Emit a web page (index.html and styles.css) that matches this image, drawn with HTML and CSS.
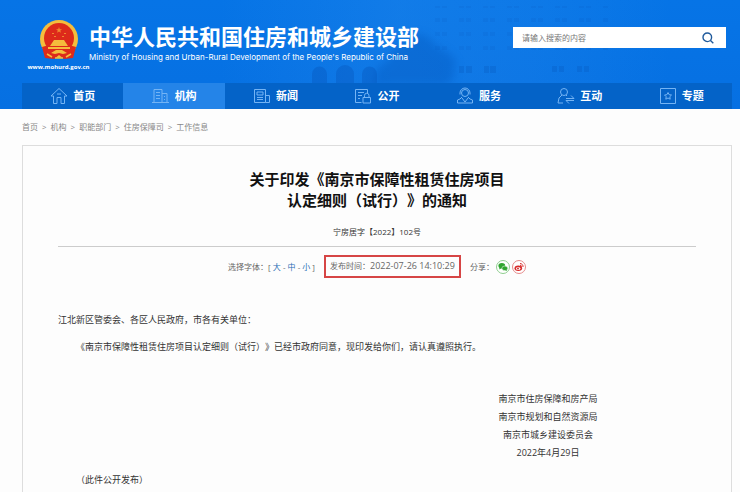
FILE: index.html
```html
<!DOCTYPE html>
<html lang="zh-CN">
<head>
    <meta charset="utf-8">
    <meta name="viewport" content="width=device-width, initial-scale=1">
    <title>中华人民共和国住房和城乡建设部</title>
    <link rel="stylesheet" href="styles.css">
</head>
<body>

<header class="header">
    <svg class="skyline" viewBox="0 0 740 109" preserveAspectRatio="xMidYMax slice" aria-hidden="true">
        <defs>
            <pattern id="windows" width="24" height="14" patternUnits="userSpaceOnUse">
                <path d="M3 4h5v4H3zM10 4h5v4h-5z" fill="#0552b8"/>
            </pattern>
            <linearGradient id="haze">
                <stop offset="0" stop-color="#3a97f0" stop-opacity="0"/>
                <stop offset=".4" stop-color="#3a97f0" stop-opacity=".22"/>
                <stop offset=".7" stop-color="#3a97f0" stop-opacity=".15"/>
                <stop offset="1" stop-color="#3a97f0" stop-opacity="0"/>
            </linearGradient>
            <filter id="soft" x="-20%" y="-20%" width="140%" height="140%">
                <feGaussianBlur stdDeviation="4"/>
            </filter>
        </defs>
        <path d="M220 0h450v83H220z" fill="url(#haze)"/>
        <path d="M432 6h178v54H432z" fill="url(#windows)" opacity=".13"/>
        <path d="M312 83V74a7 7 0 0 1 15 0v9zM336 83V74a9 9 0 0 1 18 0v9zM362 83V74a7 7 0 0 1 15 0v9z" fill="#0552b8" opacity=".35"/>
        <path d="M372 86l6-19 10-6 6-12 10-6 12-10 12 4 10 10 11 6 8 10-4 6 2 8-10 9z" fill="#0552b8" opacity=".35" filter="url(#soft)"/>
        <path d="M459 66h5v7h-5zM466 66h6v7h-6zM484 66h5v7h-5zM490 66h6v7h-6zM552 66h5v6h-5zM559 66h5v6h-5zM577 66h5v6h-5zM584 66h5v6h-5z" fill="#0552b8" opacity=".25"/>
    </svg>

    <div class="wrap masthead">
        <div class="emblem">
            <svg width="40" height="42" viewBox="0 0 40 42" aria-hidden="true">
                <circle cx="20" cy="20" r="19" fill="#f5bd3c"/>
                <circle cx="20" cy="19" r="15" fill="#dd2a1b"/>
                <path d="M3 28l7-2 3 5h14l3-5 7 2-3 11-9 1-5-4-5 4-9-1z" fill="#dd2a1b"/>
                <path d="M20 8l.8 2.200H23l-1.700 1.400.6 2.200L20 12.500l-1.900 1.300.6-2.200L17 10.200h2.200z" fill="#f08a30"/>
                <path d="M13 14h2v1h-2zM25 14h2v1h-2zM15 17h2v1h-2zM23 17h2v1h-2z" fill="#f08a30"/>
                <path d="M13 24l2-3h10l2 3 2 3H11z" fill="#f5bd3c"/>
                <path d="M9 28h22v2H9z" fill="#f5bd3c"/>
                <path d="M12 34l5-3h6l5 3-4 1-4-1-4 1z" fill="#f5bd3c"/>
                <path d="M8 35l5 3M32 35l-5 3M16 39h8" stroke="#f5bd3c" stroke-width="1.5" fill="none"/>
            </svg>
            <span class="domain">www.mohurd.gov.cn</span>
        </div>
        <div class="name">
            <h1>中华人民共和国住房和城乡建设部</h1>
            <p>Ministry of Housing and Urban-Rural Development of the People's Republic of China</p>
        </div>
        <form class="search" onsubmit="return false">
            <input type="text" placeholder="请输入搜索的内容" aria-label="搜索">
            <button type="submit" aria-label="搜索">
                <svg width="12" height="12" viewBox="0 0 12 12" fill="none" stroke="#1f5a9c" stroke-width="1.4">
                    <circle cx="5.3" cy="5.3" r="4.3"/>
                    <path d="M8.5 8.5l2.8 2.8"/>
                </svg>
            </button>
        </form>
    </div>

    <nav class="wrap nav">
        <a href="#">
            <svg viewBox="0 0 18 18"><path d="M1 9l8-7.500 8 7.500h-2.500v7.500h-3.500v-6h-4v6H3.500V9zM7 7h4"/></svg>
            首页
        </a>
        <a href="#" class="active">
            <svg viewBox="0 0 18 18"><path d="M2 15.500V2.500h8v13M10 6.500h5v9M0 15.500h17M4 5.500h4M4 8.500h4M4 11.500h4M12 9.500h1M12 12.500h1"/></svg>
            机构
        </a>
        <a href="#">
            <svg viewBox="0 0 18 18"><path d="M12.500 15.500h-11v-13h11v13h4v-7h-4M4 5h6v3H4zM4 10.500h6M4 12.500h6"/></svg>
            新闻
        </a>
        <a href="#">
            <svg viewBox="0 0 18 18"><path d="M7.500 15.500h-6v-13h12v4M4 5.500h6M4 8.500h4M4 11.500h2M9 10.500h7.500v5.500H9zM10.500 10.500V8.500a2 2 0 0 1 4.500 0v2"/></svg>
            公开
        </a>
        <a href="#">
            <svg viewBox="0 0 18 18"><circle cx="9" cy="6" r="3.500"/><path d="M4 7.500V6a5 5 0 0 1 10 0v1.500M6 10l-2 2-2.500 1v3h15v-3L14 12l-2-2M6 11l3 4 3-4"/></svg>
            服务
        </a>
        <a href="#">
            <svg viewBox="0 0 18 18"><circle cx="7" cy="5" r="3.500"/><path d="M5 8l-3 3-1 5h5M9 8l1 1M9 11.500h8l-3-3M17 13.500H9l3 3"/></svg>
            互动
        </a>
        <a href="#">
            <svg viewBox="0 0 18 18"><path d="M1.500 1.500h15v15h-15zM9 5.500l1.100 2.200 2.400.3-1.700 1.700.4 2.500L9 11l-2.200 1.200.4-2.500L5.500 8l2.400-.3z"/></svg>
            专题
        </a>
    </nav>
</header>

<main class="wrap">
    <div class="crumbs">
        <a href="#">首页</a>
        <span>&gt;</span>
        <a href="#">机构</a>
        <span>&gt;</span>
        <a href="#">职能部门</a>
        <span>&gt;</span>
        <a href="#">住房保障司</a>
        <span>&gt;</span>
        <a href="#">工作信息</a>
    </div>

    <article class="article">
        <h2>关于印发《南京市保障性租赁住房项目<br>认定细则（试行）》的通知</h2>
        <p class="doc-no">宁房居字【2022】102号</p>

        <div class="meta">
            <span class="font-size">选择字体：[ <a href="#">大</a> - <a href="#">中</a> - <a href="#">小</a> ]</span>
            <span class="published">发布时间：<time>2022-07-26 14:10:29</time></span>
            <span class="share">
                分享：
                <a href="#" aria-label="微信">
                    <svg width="14" height="14" viewBox="0 0 14 14">
                        <circle cx="7" cy="7" r="6.500" fill="#fff" stroke="#8fce8f"/>
                        <ellipse cx="5.800" cy="5.800" rx="3.400" ry="2.800" fill="#2fa52f"/>
                        <path d="M3.500 7.500l-.3 2 2-1.300z" fill="#2fa52f"/>
                        <ellipse cx="8.800" cy="8.300" rx="2.900" ry="2.300" fill="#2fa52f" stroke="#fff" stroke-width=".5"/>
                        <path d="M9 10l1.800 1-.3-2z" fill="#2fa52f"/>
                    </svg>
                </a>
                <a href="#" aria-label="微博">
                    <svg width="14" height="14" viewBox="0 0 14 14">
                        <circle cx="7" cy="7" r="6.500" fill="#fff" stroke="#e58a8a"/>
                        <ellipse cx="6.300" cy="8.300" rx="3.800" ry="2.700" fill="#d82c2c"/>
                        <ellipse cx="6.200" cy="8.500" rx="2.200" ry="1.500" fill="#fff"/>
                        <circle cx="6" cy="8.600" r="1" fill="#d82c2c"/>
                        <path d="M8 3.500a3 3 0 0 1 3 3.500M8 5.200a1.400 1.400 0 0 1 1.400 1.600" fill="none" stroke="#d82c2c"/>
                    </svg>
                </a>
            </span>
        </div>

        <div class="content">
            <p>江北新区管委会、各区人民政府，市各有关单位：</p>
            <p class="indent">《南京市保障性租赁住房项目认定细则（试行）》已经市政府同意，现印发给你们，请认真遵照执行。</p>
            <div class="signature">
                <p>南京市住房保障和房产局</p>
                <p>南京市规划和自然资源局</p>
                <p>南京市城乡建设委员会</p>
                <p>2022年4月29日</p>
            </div>
            <p class="indent">（此件公开发布）</p>
        </div>
    </article>
</main>

</body>
</html>
```

FILE: styles.css
```css
* {
    box-sizing: border-box;
}

body {
    display: flex;
    flex-direction: column;
    min-height: 100vh;
    margin: 0;
    font-family: "Open Sans", "Noto Sans CJK SC", sans-serif;
    font-size: 9px;
    line-height: 18px;
    text-spacing-trim: space-all;
    color: #333;
    background-color: #fdfdfd;
}

h1, h2, p {
    margin: 0;
}

a {
    color: inherit;
    text-decoration: none;
}

.wrap {
    margin: 0 8px 0 22px;
}

/* header */
.header {
    position: relative;
    background: linear-gradient(#0674e6, #0670e2);
    color: #fff;
}

.skyline {
    position: absolute;
    top: 0;
    left: 0;
    width: 100%;
    height: 100%;
}

.masthead {
    position: relative;
    display: flex;
    align-items: flex-start;
    height: 83px;
    padding: 19px 6px 0 6px;
}

.emblem {
    display: flex;
    flex-direction: column;
    align-items: center;
    width: 61px;
}

.domain {
    font-size: 6px;
    font-weight: bold;
    line-height: 12px;
}

.name {
    flex: 1;
    white-space: nowrap;
}

.name h1 {
    font-size: 22px;
    line-height: 34px;
}

.name p {
    font-family: Inter, sans-serif;
    font-size: 8px;
    line-height: 8px;
}

.search {
    display: flex;
    width: 213px;
    height: 21px;
    margin-top: 8px;
    background-color: #fff;
}

.search input {
    flex: 1;
    min-width: 0;
    padding: 0 9px;
    border: none;
    background: none;
    font-family: inherit;
    font-size: 8px;
}

.search input::placeholder {
    color: #777;
}

.search button {
    display: flex;
    align-items: center;
    justify-content: center;
    width: 36px;
    padding: 0;
    border: none;
    background: none;
}

.nav {
    position: relative;
    display: flex;
    background-color: #0463c8;
}

.nav a {
    flex: 1;
    display: flex;
    align-items: center;
    justify-content: center;
    gap: 5px;
    height: 26px;
    font-size: 11px;
    font-weight: bold;
}

.nav a.active {
    background-color: #2484e8;
}

.nav svg {
    width: 18px;
    height: 18px;
    fill: none;
    stroke: #74b4f5;
    stroke-width: 1;
}

/* page */
main {
    flex: 1;
    display: flex;
    flex-direction: column;
}

.crumbs {
    display: flex;
    gap: 4px;
    padding: 9px 0;
    font-size: 8px;
    color: #888;
}

.article {
    flex: 1;
    padding: 23px 35px 0;
    border: 1px solid #ddd;
    border-bottom: none;
}

.article h2 {
    font-size: 15px;
    line-height: 21px;
    text-align: center;
    color: #111;
}

.doc-no {
    padding: 12px 0 5px;
    border-bottom: 1px solid #ccc;
    font-size: 8px;
    text-align: center;
}

.meta {
    display: flex;
    align-items: center;
    justify-content: center;
    gap: 9px;
    padding-top: 8px;
    font-size: 8px;
    color: #666;
}

.font-size a {
    color: #2a6fb5;
}

.published {
    padding: 0 4px 1px;
    border: 2px solid #d64545;
}

.published time {
    font-size: 9px;
}

.share {
    display: flex;
    align-items: center;
    gap: 2px;
}

.share a {
    display: flex;
}

.content {
    padding-top: 33px;
}

.content .indent {
    margin-top: 9px;
    padding-left: 18px;
}

.signature {
    width: 110px;
    margin: 34px 93px 0 auto;
    text-align: center;
}
```
